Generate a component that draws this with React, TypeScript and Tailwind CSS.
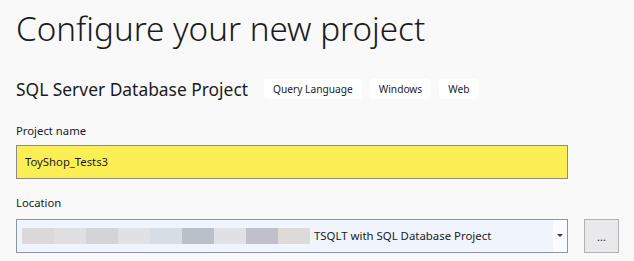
import React from 'react'

const blur = ['#dad8db', '#dfdfe2', '#d3d4d7', '#e0e1e4', '#d6dde4', '#b9c0c9', '#e0e1e4', '#c0c0cc', '#dcdbd8']

export default function App() {
  return (
    <div className="h-[261px] w-[634px] overflow-hidden bg-[#f9f9f9] pl-4 text-[#1b1b1b] font-['Segoe_UI','Noto_Sans',sans-serif]">
      <h1 className="pt-[9px] text-[33.2px] leading-[40px] font-light">Configure your new project</h1>

      <div className="mt-[28px] flex items-center">
        <h2 className="text-[17.4px] leading-[24px] font-normal">SQL Server Database Project</h2>
        <div className="ml-4 flex gap-2">
          <span className="rounded bg-white px-[9px] text-[10.2px] leading-[20px]">Query Language</span>
          <span className="rounded bg-white px-[9px] text-[10.2px] leading-[20px]">Windows</span>
          <span className="rounded bg-white px-[9px] text-[10.2px] leading-[20px]">Web</span>
        </div>
      </div>

      <div className="mt-[22px] text-[11.3px] leading-[16px]">Project name</div>
      <div className="mt-[6px] flex h-[34px] w-[552px] items-center border border-[#8a8a8a] bg-[#fbef55] px-[8px] text-[11.3px]">
        ToyShop_Tests3
      </div>

      <div className="mt-[16px] text-[11.3px] leading-[16px]">Location</div>
      <div className="mt-[8px] flex items-center gap-4">
        <div className="flex h-[34px] w-[552px] items-center border border-[#8b93a4] bg-[#f0f4fc] pl-[5px] text-[11.4px]">
          <div className="flex h-[16px]">
            {blur.map((c, i) => (
              <div key={i} className="h-full w-[32px]" style={{ background: c }} />
            ))}
          </div>
          <span className="ml-[4px] flex-1">TSQLT with SQL Database Project</span>
          <div className="flex h-full w-[14px] items-center justify-center bg-[#f9fbfe]">
            <svg width="6" height="4" viewBox="0 0 6 4"><path d="M0 0h6L3 3z" fill="#333" /></svg>
          </div>
        </div>
        <button className="flex h-[34px] w-[35px] items-center justify-center border border-[#b3b3b3] bg-[#e9e9ec] text-[11px] leading-none">
          ...
        </button>
      </div>
    </div>
  )
}
